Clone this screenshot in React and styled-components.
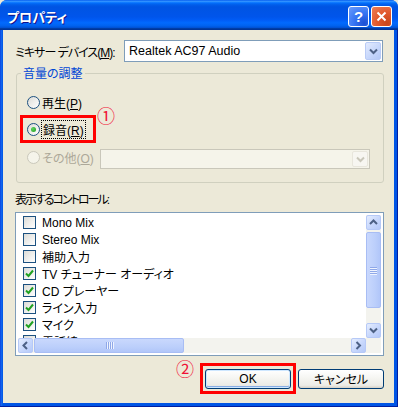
import React from "react";
import styled, { createGlobalStyle } from "styled-components";

const GlobalStyle = createGlobalStyle`
  html, body {
    margin: 0;
    padding: 0;
    background: #ece9d8;
  }
  body {
    font-family: "Liberation Sans", "Noto Sans CJK JP", sans-serif;
    font-size: 12px;
    font-feature-settings: "palt";
    color: #000;
  }
`;

const controls = [
  { label: "Mono Mix", checked: false },
  { label: "Stereo Mix", checked: false },
  { label: "補助入力", checked: false },
  { label: "TV チューナー オーディオ", checked: true },
  { label: "CD プレーヤー", checked: true },
  { label: "ライン入力", checked: true },
  { label: "マイク", checked: true },
  { label: "電話線", checked: true },
];

function Arrow({ dir = "down", color = "#4d6185" }) {
  const paths = {
    down: "M1 1.5 L4.5 5 L8 1.5",
    up: "M1 5 L4.5 1.5 L8 5",
    left: "M5 1 L1.5 4.5 L5 8",
    right: "M1.5 1 L5 4.5 L1.5 8",
  };
  const wide = dir === "down" || dir === "up";
  return (
    <svg width={wide ? 9 : 7} height={wide ? 7 : 9} viewBox={wide ? "0 0 9 7" : "0 0 7 9"}>
      <path d={paths[dir]} stroke={color} strokeWidth="2" fill="none" />
    </svg>
  );
}

function App() {
  return (
    <>
      <GlobalStyle />
      <Window>
        <TitleBar>
          <Title>プロパティ</Title>
          <CaptionButton>?</CaptionButton>
          <CaptionButton $close>
            <svg width="11" height="11" viewBox="0 0 11 11">
              <path d="M1.5 1.5 L9.5 9.5 M9.5 1.5 L1.5 9.5" stroke="#fff" strokeWidth="2" />
            </svg>
          </CaptionButton>
        </TitleBar>
        <Frame>
          <Client>
            <DeviceRow>
              <DeviceLabel>
                ミキサー デバイス(<u>M</u>):
              </DeviceLabel>
              <Combo>
                <ComboText>Realtek AC97 Audio</ComboText>
                <DropButton>
                  <Arrow dir="down" />
                </DropButton>
              </Combo>
            </DeviceRow>

            <Group>
              <Legend>音量の調整</Legend>
              <RadioRow>
                <Radio />
                <span>
                  再生(<u>P</u>)
                </span>
              </RadioRow>
              <MarkRow>
                <Highlight $w={76}>
                  <RadioRow $focus>
                    <Radio $checked />
                    <FocusText>
                      録音(<u>R</u>)
                    </FocusText>
                  </RadioRow>
                </Highlight>
                <Mark>①</Mark>
              </MarkRow>
              <OtherRow>
                <RadioRow $disabled>
                  <Radio $disabled />
                  <span>
                    その他(<u>O</u>)
                  </span>
                </RadioRow>
                <Combo $disabled>
                  <ComboText />
                  <DropButton $disabled>
                    <Arrow dir="down" color="#c9c7ba" />
                  </DropButton>
                </Combo>
              </OtherRow>
            </Group>

            <ListLabel>表示するコントロール:</ListLabel>
            <ListBox>
              <Items>
                {controls.map((c) => (
                  <Item key={c.label}>
                    <Check>
                      {c.checked && (
                        <svg width="9" height="9" viewBox="0 0 9 9">
                          <path d="M1 4.5 L3.5 7 L8 1.5" stroke="#21a121" strokeWidth="2" fill="none" />
                        </svg>
                      )}
                    </Check>
                    <span>{c.label}</span>
                  </Item>
                ))}
              </Items>
              <VScroll>
                <ScrollBtn>
                  <Arrow dir="up" />
                </ScrollBtn>
                <VThumb>
                  <Grip $vertical>
                    <i />
                    <i />
                    <i />
                    <i />
                  </Grip>
                </VThumb>
                <Track />
                <ScrollBtn>
                  <Arrow dir="down" />
                </ScrollBtn>
              </VScroll>
              <HScroll>
                <ScrollBtn>
                  <Arrow dir="left" />
                </ScrollBtn>
                <HThumb>
                  <Grip>
                    <i />
                    <i />
                    <i />
                    <i />
                  </Grip>
                </HThumb>
                <Track />
                <ScrollBtn>
                  <Arrow dir="right" />
                </ScrollBtn>
              </HScroll>
              <Corner />
            </ListBox>

            <ButtonRow>
              <Mark $low>②</Mark>
              <Highlight $w={96} $pad="3px 2px 2px">
                <PushButton $default>OK</PushButton>
              </Highlight>
              <PushButton>キャンセル</PushButton>
            </ButtonRow>
          </Client>
        </Frame>
      </Window>
    </>
  );
}

export default App;

const Window = styled.div`
  width: 398px;
  height: 407px;
  display: flex;
  flex-direction: column;
  background: #0054e3;
  border-radius: 7px 7px 0 0;
  overflow: hidden;
`;

const TitleBar = styled.div`
  height: 30px;
  flex: 0 0 30px;
  display: flex;
  align-items: center;
  gap: 2px;
  padding: 2px 6px 0 7px;
  box-sizing: border-box;
  background: linear-gradient(
    #0058ee 0%,
    #3593ff 4%,
    #288eff 6%,
    #127dff 8%,
    #036ffc 10%,
    #0262ee 14%,
    #0057e5 20%,
    #0054e3 24%,
    #0055eb 56%,
    #005bf5 66%,
    #026afe 76%,
    #0062ef 86%,
    #0052d6 92%,
    #0040ab 94%,
    #003092 100%
  );
`;

const Title = styled.div`
  flex: 1;
  color: #fff;
  font-family: "Noto Sans CJK JP", sans-serif;
  font-weight: bold;
  font-size: 13px;
  text-shadow: 1px 1px #0f1089;
`;

const CaptionButton = styled.div`
  width: 21px;
  height: 21px;
  box-sizing: border-box;
  border: 1px solid #fff;
  border-radius: 3px;
  display: flex;
  align-items: center;
  justify-content: center;
  color: #fff;
  font-family: "Liberation Sans", sans-serif;
  font-weight: bold;
  font-size: 15px;
  background: ${(p) =>
    p.$close
      ? "radial-gradient(circle at 80% 85%, #c9471c 0%, #e0582c 45%, #ee7f58 100%)"
      : "radial-gradient(circle at 80% 85%, #1b4fd3 0%, #3674f3 45%, #6a9cfb 100%)"};
`;

const Frame = styled.div`
  flex: 1;
  display: flex;
  padding: 0 4px 4px 3px;
  background: linear-gradient(90deg, #0831d9 0, #166aee 1px, #0055e5 3px);
  box-shadow: inset -1px -1px 0 #001ea0;
`;

const Client = styled.div`
  flex: 1;
  display: flex;
  flex-direction: column;
  background: #ece9d8;
  padding-top: 10px;
`;

const DeviceRow = styled.div`
  display: flex;
  align-items: center;
  padding: 0 11px 0 12px;
`;

const DeviceLabel = styled.div`
  width: 109px;
  min-width: 0;
  flex: 0 0 109px;
  white-space: nowrap;
  letter-spacing: -1px;
`;

const Combo = styled.div`
  flex: 1;
  height: ${(p) => (p.$disabled ? 20 : 22)}px;
  box-sizing: border-box;
  display: flex;
  align-items: center;
  border: 1px solid ${(p) => (p.$disabled ? "#c9c7ba" : "#7f9db9")};
  background: ${(p) => (p.$disabled ? "#f5f4ea" : "#fff")};
  padding: 1px;
`;

const ComboText = styled.div`
  flex: 1;
  padding-left: 3px;
  font-size: 12.5px;
`;

const DropButton = styled.div`
  width: 16px;
  height: 100%;
  box-sizing: border-box;
  display: flex;
  align-items: center;
  justify-content: center;
  border-radius: 2px;
  border: 1px solid ${(p) => (p.$disabled ? "#e8e6dc" : "#b9cbf6")};
  background: ${(p) =>
    p.$disabled ? "#f7f6f1" : "linear-gradient(135deg, #e3ebfe 0%, #c4d5fb 60%, #b4c8f6 100%)"};
`;

const Group = styled.fieldset`
  margin: 4px 10px 0 13px;
  padding: 0 13px 13px 3px;
  border: 1px solid #d0d0bf;
  border-radius: 3px;
  display: flex;
  flex-direction: column;
`;

const Legend = styled.legend`
  margin-left: 1px;
  padding: 0 2px;
  line-height: 14px;
  color: #0046d5;
  font-family: "Noto Sans CJK JP", sans-serif;
  font-size: 12px;
`;

const RadioRow = styled.div`
  display: flex;
  align-items: center;
  gap: 2px;
  height: 16px;
  padding-left: ${(p) => (p.$focus ? 4 : 7)}px;
  margin-top: ${(p) => (p.$focus ? 0 : 14)}px;
  color: ${(p) => (p.$disabled ? "#aca899" : "#000")};
  white-space: nowrap;
`;

const Radio = styled.span`
  width: 13px;
  height: 13px;
  box-sizing: border-box;
  border-radius: 50%;
  border: 1px solid ${(p) => (p.$disabled ? "#cac8bb" : "#1c5180")};
  background: ${(p) => (p.$disabled ? "#f5f4ea" : "linear-gradient(135deg, #dcdcd7, #fff)")};
  display: flex;
  align-items: center;
  justify-content: center;

  &::after {
    content: "";
    display: ${(p) => (p.$checked ? "block" : "none")};
    width: 5px;
    height: 5px;
    border-radius: 50%;
    background: radial-gradient(circle at 35% 35%, #5fd35f, #1c9d1c);
  }
`;

const FocusText = styled.span`
  outline: 1px dotted #000;
  outline-offset: 0;
  padding: 0 1px;
`;

const MarkRow = styled.div`
  display: flex;
  margin-top: 5px;
`;

const Highlight = styled.div`
  width: ${(p) => p.$w}px;
  box-sizing: border-box;
  border: 3px solid #ff0000;
  padding: ${(p) => p.$pad || "3px 0"};
  display: flex;
`;

const Mark = styled.div`
  align-self: flex-start;
  margin: ${(p) => (p.$low ? "-4px 4px 0 0" : "-9px 0 0 1px")};
  color: #f01035;
  font-family: "Noto Sans CJK JP", sans-serif;
  font-size: 18px;
  line-height: 18px;
`;

const OtherRow = styled.div`
  display: flex;
  align-items: center;
  margin-top: 6px;

  & > ${RadioRow} {
    margin-top: -4px;
    flex: 0 0 73px;
  }
`;

const ListLabel = styled.div`
  margin: 9px 0 0 12px;
  line-height: 16px;
  letter-spacing: -2px;
`;

const ListBox = styled.div`
  margin: 4px 10px 0 12px;
  height: 144px;
  box-sizing: border-box;
  border: 1px solid #7f9db9;
  background: #fff;
  padding: 2px;
  display: grid;
  grid-template-columns: 1fr 15px;
  grid-template-rows: 1fr 15px;
`;

const Items = styled.div`
  overflow: hidden;
`;

const Item = styled.div`
  display: flex;
  align-items: center;
  gap: 6px;
  height: 17px;
  padding-left: 5px;
  white-space: nowrap;

  &:first-child {
    margin-top: -1px;
  }
`;

const Check = styled.span`
  width: 13px;
  height: 13px;
  flex: 0 0 13px;
  box-sizing: border-box;
  border: 1px solid #1c5180;
  background: linear-gradient(135deg, #dcdcd7, #fff);
  display: flex;
  align-items: center;
  justify-content: center;
`;

const VScroll = styled.div`
  display: flex;
  flex-direction: column;
  background: #f3f3ee;
`;

const HScroll = styled.div`
  display: flex;
  background: #f3f3ee;
`;

const Corner = styled.div`
  background: #f3f3ee;
`;

const ScrollBtn = styled.div`
  width: 15px;
  height: 15px;
  flex: 0 0 15px;
  box-sizing: border-box;
  border: 1px solid #b6c9f7;
  border-radius: 2px;
  background: linear-gradient(135deg, #e5edfe 0%, #c7d7fc 55%, #b5c9f8 100%);
  display: flex;
  align-items: center;
  justify-content: center;
`;

const VThumb = styled.div`
  height: 76px;
  margin-top: 2px;
  box-sizing: border-box;
  border: 1px solid #a8bdf4;
  border-radius: 2px;
  background: linear-gradient(90deg, #c9d8fd, #bccffb 60%, #b1c6f9);
  display: flex;
  align-items: center;
  justify-content: center;
`;

const HThumb = styled.div`
  width: 150px;
  margin-left: 1px;
  box-sizing: border-box;
  border: 1px solid #a8bdf4;
  border-radius: 2px;
  background: linear-gradient(#c9d8fd, #bccffb 60%, #b1c6f9);
  display: flex;
  align-items: center;
  justify-content: center;
`;

const Grip = styled.div`
  display: flex;
  flex-direction: ${(p) => (p.$vertical ? "column" : "row")};
  gap: 1px;

  & > i {
    display: block;
    width: ${(p) => (p.$vertical ? "7px" : "1px")};
    height: ${(p) => (p.$vertical ? "1px" : "7px")};
    background: #8fa8e8;
    box-shadow: ${(p) => (p.$vertical ? "0 1px #eef3ff" : "1px 0 #eef3ff")};
  }
`;

const Track = styled.div`
  flex: 1;
`;

const ButtonRow = styled.div`
  display: flex;
  justify-content: flex-end;
  align-items: center;
  gap: 2px;
  margin-top: 7px;
  padding-right: 10px;
`;

const PushButton = styled.div`
  width: 86px;
  height: 20px;
  box-sizing: border-box;
  border: 1px solid #003c74;
  border-radius: 3px;
  display: flex;
  align-items: center;
  justify-content: center;
  background: linear-gradient(#fff 0%, #f4f4f0 50%, #ecebe6 85%, #d6d0c5 100%);
  box-shadow: ${(p) =>
    p.$default ? "inset 0 0 0 1px #cee7ff, inset 0 -1px 0 1px #89ade4" : "none"};
  font-size: 12px;
`;
